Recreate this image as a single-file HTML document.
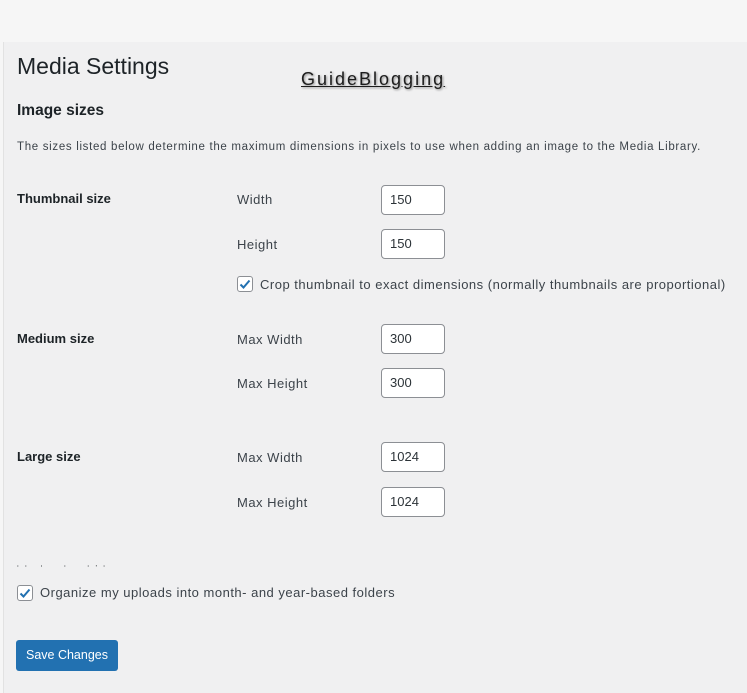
<!DOCTYPE html>
<html><head><meta charset="utf-8"><style>
html,body{margin:0;padding:0}
body{width:747px;height:693px;background:#f6f6f6;position:relative;overflow:hidden;font-family:"Liberation Sans",sans-serif;color:#3c434a}
.main{position:absolute;left:3px;top:42px;right:0;bottom:0;background:#f0f0f1;border-left:1px solid #e2e2e2}
.t{position:absolute;white-space:nowrap}
.h1{font-size:23px;color:#1d2327;left:17px;top:53px}
.h2{font-size:15.5px;font-weight:bold;color:#1d2327;left:17px;top:102px}
.p{font-size:11.5px;left:17px;top:141px;letter-spacing:0.68px}
.lbl{font-size:13px;font-weight:bold;color:#1d2327;left:17px}
.fl{font-size:13px;left:237px;letter-spacing:0.5px}
.in{position:absolute;left:381px;width:62px;height:28px;background:#fff;border:1px solid #8c8f94;border-radius:4px;font-size:13px;line-height:28px;text-indent:8px;color:#2c3338;box-sizing:content-box}
.cb{position:absolute;width:14px;height:14px;border:1px solid #8c8f94;border-radius:3px;background:#fff}
.cb svg{position:absolute;left:-1px;top:-1px}
.btn{position:absolute;left:16px;top:640px;width:102px;height:31px;background:#2271b1;border-radius:3px;color:#fff;font-size:12.5px;line-height:31px;text-align:center}
.wm{left:301px;top:69px;font-size:18px;color:#1d1d1d;text-decoration:underline;text-shadow:1px 1px 2px #888;letter-spacing:2px}
</style></head><body>
<div class="main"></div>
<div class="t h1">Media Settings</div>
<div class="t wm">GuideBlogging</div>
<div class="t h2">Image sizes</div>
<div class="t p">The sizes listed below determine the maximum dimensions in pixels to use when adding an image to the Media Library.</div>

<div class="t lbl" style="top:191px">Thumbnail size</div>
<div class="t fl" style="top:192px">Width</div>
<div class="in" style="top:185px">150</div>
<div class="t fl" style="top:237px">Height</div>
<div class="in" style="top:229px">150</div>
<div class="cb" style="left:237px;top:276px"><svg width="16" height="16" viewBox="0 0 16 16"><path d="M3.5 8.5l3 3 6-7" fill="none" stroke="#2271b1" stroke-width="2"/></svg></div>
<div class="t fl" style="left:260px;top:277px">Crop thumbnail to exact dimensions (normally thumbnails are proportional)</div>

<div class="t lbl" style="top:331px">Medium size</div>
<div class="t fl" style="top:332px">Max Width</div>
<div class="in" style="top:324px">300</div>
<div class="t fl" style="top:376px">Max Height</div>
<div class="in" style="top:368px">300</div>

<div class="t lbl" style="top:449px">Large size</div>
<div class="t fl" style="top:450px">Max Width</div>
<div class="in" style="top:442px">1024</div>
<div class="t fl" style="top:495px">Max Height</div>
<div class="in" style="top:487px">1024</div>

<div class="t" style="left:17px;top:563px;font-size:6px;color:#1d2327;letter-spacing:6px;font-weight:bold">·· · &nbsp;· &nbsp;·‧·</div>
<div class="cb" style="left:17px;top:585px"><svg width="16" height="16" viewBox="0 0 16 16"><path d="M3.5 8.5l3 3 6-7" fill="none" stroke="#2271b1" stroke-width="2"/></svg></div>
<div class="t fl" style="left:40px;top:585px">Organize my uploads into month- and year-based folders</div>

<div class="btn">Save Changes</div>
</body></html>
